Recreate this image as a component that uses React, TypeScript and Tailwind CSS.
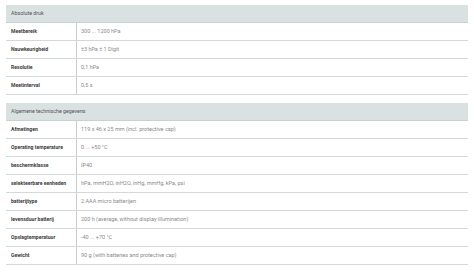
const sections: { title: string; rows: [string, string][] }[] = [
  {
    title: "Absolute druk",
    rows: [
      ["Meetbereik", "300 ... 1200 hPa"],
      ["Nauwkeurigheid", "±3 hPa ± 1 Digit"],
      ["Resolutie", "0,1 hPa"],
      ["Meetinterval", "0,5 s"],
    ],
  },
  {
    title: "Algemene technische gegevens",
    rows: [
      ["Afmetingen", "119 x 46 x 25 mm (incl. protective cap)"],
      ["Operating temperature", "0 ... +50 °C"],
      ["beschermklasse", "IP40"],
      ["selekteerbare eenheden", "hPa, mmH2O, inH2O, inHg, mmHg, kPa, psi"],
      ["batterijtype", "2 AAA micro batterijen"],
      ["levensduur batterij", "200 h (average, without display illumination)"],
      ["Opslagtemperatuur", "-40 ... +70 °C"],
      ["Gewicht", "90 g (with batteries and protective cap)"],
    ],
  },
];

export default function App() {
  return (
    <div className="h-[276px] w-[474px] bg-white pl-[6px] pt-[5px] font-['Roboto',sans-serif]">
      <div className="flex w-[462px] flex-col gap-[8px]">
        {sections.map((section) => (
          <div key={section.title} className="flex flex-col">
            <div className="flex h-[18px] items-center border-b border-[#c9d2d3] bg-[#d9e1e1] pl-[5px] text-[5.3px] text-[#555]">
              {section.title}
            </div>
            {section.rows.map(([label, value]) => (
              <div key={label} className="grid h-[18px] grid-cols-[71px_1fr] border-b border-[#d3d8d8]">
                <div className="flex items-center border-r border-[#c8cccc] pl-[5px] text-[5.1px] font-bold text-[#3a3a3a]">
                  {label}
                </div>
                <div className="flex items-center pl-[4px] text-[5.5px] text-[#8a8a8a]">{value}</div>
              </div>
            ))}
          </div>
        ))}
      </div>
    </div>
  );
}
